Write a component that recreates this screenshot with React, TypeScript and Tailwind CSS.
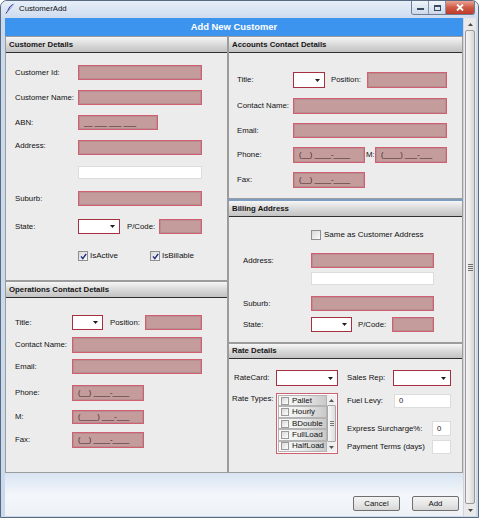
import React from "react";

type Kids = { children?: React.ReactNode };

function Label({ w, children }: { w: string } & Kids) {
  return <div className={`${w} shrink-0 text-[7.8px] leading-none text-[#111] whitespace-nowrap`}>{children}</div>;
}

function Field({ w, h = "h-[15px]", children }: { w: string; h?: string } & Kids) {
  return (
    <div
      className={`${w} ${h} shrink-0 bg-[#c49c9c] border border-[#d0606f] shadow-[inset_0_0_0_1px_#b98e92] flex items-center pl-[5px] text-[7.5px] leading-none text-[#3a2222] whitespace-pre`}
    >
      {children}
    </div>
  );
}

function WhiteBox({ w, h = "h-[13px]", children }: { w: string; h?: string } & Kids) {
  return (
    <div className={`${w} ${h} shrink-0 bg-white border border-[#dcdcdc] flex items-center pl-[4px] text-[7.7px] leading-none text-[#222]`}>
      {children}
    </div>
  );
}

function Combo({ w, h = "h-[16px]" }: { w: string; h?: string }) {
  return (
    <div className={`${w} ${h} shrink-0 bg-white border border-[#a5303f] flex items-center justify-end pr-[4px]`}>
      <svg width="5" height="3" viewBox="0 0 5 3">
        <path d="M0 0h5L2.5 3z" fill="#1e1e1e" />
      </svg>
    </div>
  );
}

function Check({ checked }: { checked?: boolean }) {
  return (
    <div className="w-[10px] h-[10px] shrink-0 border border-[#8f8f8f] bg-linear-to-br from-[#d8d8d8] to-[#fbfbfb] flex items-center justify-center">
      {checked && (
        <svg width="7" height="7" viewBox="0 0 7 7">
          <path d="M1 3.4 L2.8 5.6 L6.2 0.8" stroke="#1d2a86" strokeWidth="1.4" fill="none" />
        </svg>
      )}
    </div>
  );
}

function Header({ title, h = "h-[16px]" }: { title: string; h?: string }) {
  return (
    <div
      className={`${h} shrink-0 border-b border-[#2f2f2f] bg-linear-to-b from-[#f6f6f6] via-[#dadada] to-[#c2c2c2] flex items-center pl-[3px] text-[7.8px] font-bold text-[#151515]`}
    >
      {title}
    </div>
  );
}

function Btn({ children }: Kids) {
  return (
    <div className="w-[47px] h-[15px] rounded-[2px] border border-[#707070] bg-linear-to-b from-[#f4f4f4] via-[#e8e8e8] to-[#d6d6d6] flex items-center justify-center text-[7.8px] text-[#111]">
      {children}
    </div>
  );
}

function ListItem({ text }: { text: string }) {
  return (
    <div className="h-[12px] flex items-center gap-[3px] pl-[2px] border border-[#b4b4b4] bg-linear-to-r from-[#fcfcfc] via-[#ececec] to-[#c9c9c9]">
      <div className="w-[8px] h-[8px] border border-[#9a9a9a] bg-linear-to-br from-[#d8d8d8] to-white" />
      <span className="text-[8px] leading-none text-[#111]">{text}</span>
    </div>
  );
}

function CustomerDetails() {
  return (
    <div className="h-[245px] shrink-0 border border-[#9c9c9c] bg-[#ececec] flex flex-col">
      <Header title="Customer Details" />
      <div className="flex items-center pl-[9px] mt-[12px]">
        <Label w="w-[63px]">Customer Id:</Label>
        <Field w="w-[124px]" />
      </div>
      <div className="flex items-center pl-[9px] mt-[10px]">
        <Label w="w-[63px]">Customer Name:</Label>
        <Field w="w-[124px]" />
      </div>
      <div className="flex items-center pl-[9px] mt-[10px]">
        <Label w="w-[63px]">ABN:</Label>
        <Field w="w-[80px]">__ ___ ___ ___</Field>
      </div>
      <div className="flex items-start pl-[9px] mt-[10px]">
        <div className="pt-[2px]">
          <Label w="w-[63px]">Address:</Label>
        </div>
        <Field w="w-[124px]" />
      </div>
      <div className="flex items-center pl-[72px] mt-[11px]">
        <WhiteBox w="w-[124px]" />
      </div>
      <div className="flex items-center pl-[9px] mt-[12px]">
        <Label w="w-[63px]">Suburb:</Label>
        <Field w="w-[124px]" />
      </div>
      <div className="flex items-center pl-[9px] mt-[13px]">
        <Label w="w-[63px]">State:</Label>
        <Combo w="w-[42px]" h="h-[15px]" />
        <div className="ml-[7px]">
          <Label w="w-[32px]">P/Code:</Label>
        </div>
        <Field w="w-[43px]" />
      </div>
      <div className="flex items-center pl-[72px] mt-[17px]">
        <div className="w-[72px] flex items-center gap-[2px]">
          <Check checked />
          <span className="text-[8px] leading-none text-[#111]">IsActive</span>
        </div>
        <div className="flex items-center gap-[2px]">
          <Check checked />
          <span className="text-[8px] leading-none text-[#111]">IsBillable</span>
        </div>
      </div>
    </div>
  );
}

function OperationsContact() {
  return (
    <div className="flex-1 border border-[#9c9c9c] bg-[#ececec] flex flex-col">
      <Header title="Operations Contact Details" />
      <div className="flex items-center pl-[9px] mt-[17px]">
        <Label w="w-[57px]">Title:</Label>
        <Combo w="w-[31px]" h="h-[15px]" />
        <div className="ml-[7px]">
          <Label w="w-[35px]">Position:</Label>
        </div>
        <Field w="w-[57px]" />
      </div>
      <div className="flex items-center pl-[9px] mt-[7px]">
        <Label w="w-[57px]">Contact Name:</Label>
        <Field w="w-[130px]" h="h-[16px]" />
      </div>
      <div className="flex items-center pl-[9px] mt-[6px]">
        <Label w="w-[57px]">Email:</Label>
        <Field w="w-[130px]" />
      </div>
      <div className="flex items-center pl-[9px] mt-[11px]">
        <Label w="w-[57px]">Phone:</Label>
        <Field w="w-[72px]" h="h-[16px]">(__) ____-____</Field>
      </div>
      <div className="flex items-center pl-[9px] mt-[9px]">
        <Label w="w-[57px]">M:</Label>
        <Field w="w-[72px]" h="h-[14px]">(____) ___-___</Field>
      </div>
      <div className="flex items-center pl-[9px] mt-[8px]">
        <Label w="w-[57px]">Fax:</Label>
        <Field w="w-[72px]" h="h-[16px]">(__) ____-____</Field>
      </div>
    </div>
  );
}

function AccountsContact() {
  return (
    <div className="h-[163px] shrink-0 border border-[#9c9c9c] bg-[#ececec] flex flex-col">
      <Header title="Accounts Contact Details" />
      <div className="flex items-center pl-[8px] mt-[19px]">
        <Label w="w-[56px]">Title:</Label>
        <Combo w="w-[32px]" />
        <div className="ml-[6px]">
          <Label w="w-[36px]">Position:</Label>
        </div>
        <Field w="w-[80px]" h="h-[16px]" />
      </div>
      <div className="flex items-center pl-[8px] mt-[10px]">
        <Label w="w-[56px]">Contact Name:</Label>
        <Field w="w-[154px]" h="h-[16px]" />
      </div>
      <div className="flex items-center pl-[8px] mt-[9px]">
        <Label w="w-[56px]">Email:</Label>
        <Field w="w-[154px]" />
      </div>
      <div className="flex items-center pl-[8px] mt-[9px]">
        <Label w="w-[56px]">Phone:</Label>
        <Field w="w-[72px]" h="h-[16px]">(__) ____-____</Field>
        <div className="ml-[1px]">
          <Label w="w-[9px]">M:</Label>
        </div>
        <Field w="w-[72px]" h="h-[16px]">(____) ___-___</Field>
      </div>
      <div className="flex items-center pl-[8px] mt-[9px]">
        <Label w="w-[56px]">Fax:</Label>
        <Field w="w-[72px]" h="h-[16px]">(__) ____-____</Field>
      </div>
    </div>
  );
}

function BillingAddress() {
  return (
    <div className="h-[142px] shrink-0 border-x border-b border-[#9c9c9c] bg-[#ececec] flex flex-col">
      <Header title="Billing Address" />
      <div className="flex items-center pl-[82px] mt-[13px] gap-[3px]">
        <Check />
        <span className="text-[8px] leading-none text-[#111]">Same as Customer Address</span>
      </div>
      <div className="flex items-start pl-[14px] mt-[13px]">
        <div className="pt-[4px]">
          <Label w="w-[68px]">Address:</Label>
        </div>
        <div className="flex flex-col gap-[4px]">
          <Field w="w-[123px]" />
          <WhiteBox w="w-[123px]" />
        </div>
      </div>
      <div className="flex items-center pl-[14px] mt-[11px]">
        <Label w="w-[68px]">Suburb:</Label>
        <Field w="w-[123px]" />
      </div>
      <div className="flex items-center pl-[14px] mt-[6px]">
        <Label w="w-[68px]">State:</Label>
        <Combo w="w-[41px]" h="h-[15px]" />
        <div className="ml-[6px]">
          <Label w="w-[34px]">P/Code:</Label>
        </div>
        <Field w="w-[42px]" />
      </div>
    </div>
  );
}

function RateDetails() {
  return (
    <div className="flex-1 border border-[#9c9c9c] bg-[#ececec] flex flex-col">
      <Header title="Rate Details" h="h-[15px]" />
      <div className="flex items-center pl-[5px] mt-[11px]">
        <Label w="w-[42px]">RateCard:</Label>
        <Combo w="w-[62px]" />
        <div className="ml-[9px]">
          <Label w="w-[46px]">Sales Rep:</Label>
        </div>
        <Combo w="w-[58px]" />
      </div>
      <div className="flex items-start pl-[3px] mt-[7px]">
        <div className="pt-[2px]">
          <Label w="w-[44px]">Rate Types:</Label>
        </div>
        <div className="w-[62px] h-[61px] shrink-0 border border-[#cf6070] bg-white flex p-[1px]">
          <div className="flex-1 flex flex-col">
            <ListItem text="Pallet" />
            <ListItem text="Hourly" />
            <ListItem text="BDouble" />
            <ListItem text="FullLoad" />
            <ListItem text="HalfLoad" />
          </div>
          <div className="w-[9px] flex flex-col bg-[#efefef]">
            <div className="h-[10px] flex items-center justify-center">
              <svg width="5" height="3" viewBox="0 0 5 3">
                <path d="M0 3h5L2.5 0z" fill="#555" />
              </svg>
            </div>
            <div className="flex-1 border border-[#a8a8a8] rounded-[1px] bg-linear-to-r from-[#f8f8f8] to-[#dedede] flex items-center justify-center">
              <div className="flex flex-col gap-[1px]">
                <div className="w-[4px] h-[1px] bg-[#777]" />
                <div className="w-[4px] h-[1px] bg-[#777]" />
                <div className="w-[4px] h-[1px] bg-[#777]" />
              </div>
            </div>
            <div className="h-[10px] flex items-center justify-center">
              <svg width="5" height="3" viewBox="0 0 5 3">
                <path d="M0 0h5L2.5 3z" fill="#555" />
              </svg>
            </div>
          </div>
        </div>
        <div className="ml-[9px] flex flex-col">
          <div className="flex items-center mt-[1px] h-[14px]">
            <Label w="w-[47px]">Fuel Levy:</Label>
            <WhiteBox w="w-[57px]" h="h-[14px]">0</WhiteBox>
          </div>
          <div className="flex items-center mt-[13px]">
            <Label w="w-[85px]">Express Surcharge%:</Label>
            <WhiteBox w="w-[19px]" h="h-[15px]">0</WhiteBox>
          </div>
          <div className="flex items-center mt-[4px]">
            <Label w="w-[85px]">Payment Terms (days)</Label>
            <WhiteBox w="w-[19px]" h="h-[14px]" />
          </div>
        </div>
      </div>
    </div>
  );
}

function ScrollBar() {
  return (
    <div className="w-[13px] shrink-0 bg-[#e9e9e9] border-l border-[#d4d4d4] flex flex-col">
      <div className="h-[12px] flex items-center justify-center">
        <svg width="5" height="3" viewBox="0 0 5 3">
          <path d="M0 3h5L2.5 0z" fill="#4a4a4a" />
        </svg>
      </div>
      <div className="flex-1 mx-[1px] border border-[#999] rounded-[2px] bg-linear-to-r from-[#f4f4f4] via-[#e9e9e9] to-[#d6d6d6] flex items-center justify-center">
        <div className="flex flex-col gap-[1px]">
          <div className="w-[5px] h-[1px] bg-[#6f6f6f]" />
          <div className="w-[5px] h-[1px] bg-[#6f6f6f]" />
          <div className="w-[5px] h-[1px] bg-[#6f6f6f]" />
          <div className="w-[5px] h-[1px] bg-[#6f6f6f]" />
        </div>
      </div>
      <div className="h-[12px] flex items-center justify-center">
        <svg width="5" height="3" viewBox="0 0 5 3">
          <path d="M0 0h5L2.5 3z" fill="#4a4a4a" />
        </svg>
      </div>
    </div>
  );
}

function TitleBar() {
  return (
    <div className="h-[17px] shrink-0 flex items-start bg-linear-to-b from-[#e6eef8] to-[#cfdcef] rounded-t-[6px]">
      <div className="flex items-center h-[15px] pl-[4px] gap-[4px]">
        <svg width="10" height="11" viewBox="0 0 10 11">
          <path d="M9.5 0.5 C6 1.5 3 4.5 2 9 L3.2 8.2 C4 5.5 6.5 2.5 9.5 0.5z" fill="#3b3f9a" />
          <path d="M9.5 0.5 C7.5 3.5 5.5 6 3.2 8.2 L2 9 C4.5 6 7 3 9.5 0.5z" fill="#8a8fd8" />
          <path d="M1 10.5 L2.2 8.6" stroke="#2a2a5a" strokeWidth="1" />
        </svg>
        <span className="text-[7.8px] text-[#111]">CustomerAdd</span>
      </div>
      <div className="ml-auto mr-[3px] flex h-[14px] border border-t-0 border-[#6c7d95] rounded-b-[3px] overflow-hidden">
        <div className="w-[17px] bg-linear-to-b from-[#f1f5fb] to-[#cdd9ea] border-r border-[#8595ab] flex items-center justify-center">
          <div className="w-[7px] h-[2px] bg-[#3a4a60] mt-[3px]" />
        </div>
        <div className="w-[17px] bg-linear-to-b from-[#f1f5fb] to-[#cdd9ea] border-r border-[#8595ab] flex items-center justify-center">
          <div className="w-[7px] h-[6px] border border-[#3a4a60] border-t-2" />
        </div>
        <div className="w-[28px] bg-linear-to-b from-[#e8a194] via-[#cf5b47] to-[#c0392b] flex items-center justify-center">
          <svg width="8" height="7" viewBox="0 0 8 7">
            <path d="M1 0.5 L7 6.5 M7 0.5 L1 6.5" stroke="#fff" strokeWidth="1.8" />
          </svg>
        </div>
      </div>
    </div>
  );
}

export default function App() {
  return (
    <div className="w-[480px] h-[528px] bg-white font-['Liberation_Sans',Arial,sans-serif]">
      <div className="w-[479px] h-[518px] border border-[#596a80] rounded-t-[7px] bg-[#cad9ec] flex flex-col">
        <TitleBar />
        <div className="h-[498px] ml-[4px] mr-[2px] flex">
          <div className="w-[458px] flex flex-col">
            <div className="h-[18px] shrink-0 bg-[#3d94ee] flex items-center justify-center text-[9.4px] font-bold text-white">
              Add New Customer
            </div>
            <div className="h-[437px] shrink-0 flex">
              <div className="w-[223px] shrink-0 flex flex-col">
                <CustomerDetails />
                <OperationsContact />
              </div>
              <div className="w-[235px] shrink-0 flex flex-col">
                <AccountsContact />
                <div className="h-[2px] shrink-0 bg-[#7d9ec2]" />
                <BillingAddress />
                <RateDetails />
              </div>
            </div>
            <div className="flex-1 bg-linear-to-b from-[#d8e4f2] via-[#f3f6fa] to-[#eef1f5] flex items-end justify-end gap-[12px] pr-[4px] pb-[5px]">
              <Btn>Cancel</Btn>
              <Btn>Add</Btn>
            </div>
          </div>
          <ScrollBar />
        </div>
      </div>
    </div>
  );
}
